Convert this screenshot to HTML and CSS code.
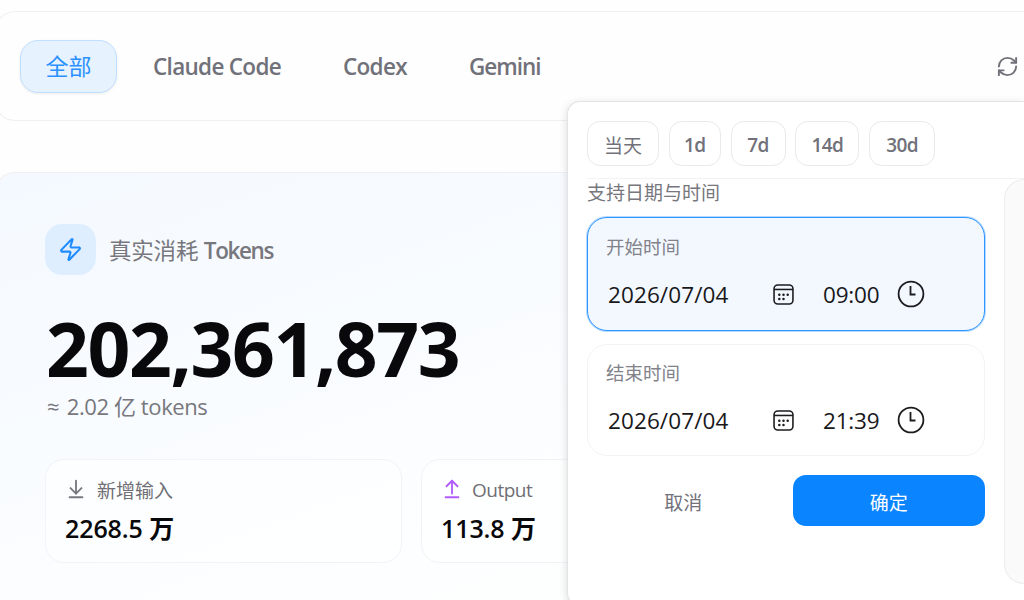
FILE: index.html
```html
<!DOCTYPE html>
<html lang="zh-CN">

<head>
    <meta charset="UTF-8">
    <meta name="viewport" content="width=device-width, initial-scale=1.0">
    <title>Token Usage</title>
    <link rel="stylesheet" href="styles.css">
</head>

<body>

    <div class="page">
        <nav class="filter-bar">
            <button class="tab active">全部</button>
            <button class="tab claude">Claude Code</button>
            <button class="tab codex">Codex</button>
            <button class="tab gemini">Gemini</button>
            <svg class="icon refresh" viewBox="0 0 24 24">
                <path d="M3 12a9 9 0 0 1 9-9 9.75 9.75 0 0 1 6.74 2.74L21 8" />
                <path d="M21 3v5h-5" />
                <path d="M21 12a9 9 0 0 1-9 9 9.75 9.75 0 0 1-6.74-2.74L3 16" />
                <path d="M8 16H3v5" />
            </svg>
        </nav>

        <section class="usage-card">
            <div class="usage-title">
                <span class="badge">
                    <svg class="icon" viewBox="0 0 24 24">
                        <path d="M4 14a1 1 0 0 1-.78-1.63l9.9-10.2a.5.5 0 0 1 .86.46l-1.92 6.02A1 1 0 0 0 13 10h7a1 1 0 0 1 .78 1.63l-9.9 10.2a.5.5 0 0 1-.86-.46l1.92-6.02A1 1 0 0 0 11 14z" />
                    </svg>
                </span>
                <h2>真实消耗 <b>Tokens</b></h2>
            </div>
            <div class="total">202,361,873</div>
            <div class="approx">≈ <span>2.02 亿 tokens</span></div>

            <div class="stats">
                <div class="stat">
                    <div class="stat-label">
                        <svg class="icon" viewBox="0 0 24 24">
                            <path d="M12 17V3" />
                            <path d="m6 11 6 6 6-6" />
                            <path d="M19 21H5" />
                        </svg>
                        <span>新增输入</span>
                    </div>
                    <div class="stat-value">2268.5 <b>万</b></div>
                </div>
                <div class="stat output">
                    <div class="stat-label">
                        <svg class="icon" viewBox="0 0 24 24">
                            <path d="m18 9-6-6-6 6" />
                            <path d="M12 3v14" />
                            <path d="M5 21h14" />
                        </svg>
                        <span>Output</span>
                    </div>
                    <div class="stat-value">113.8 <b>万</b></div>
                </div>
            </div>
        </section>
    </div>

    <div class="popover">
        <div class="presets">
            <button class="preset today">当天</button>
            <button class="preset d1">1d</button>
            <button class="preset d7">7d</button>
            <button class="preset d14">14d</button>
            <button class="preset d30">30d</button>
        </div>
        <div class="popover-body">
            <div class="range">
                <div class="hint">支持日期与时间</div>
                <div class="field selected">
                    <div class="field-label">开始时间</div>
                    <div class="field-row">
                        <span class="date">2026/07/04</span>
                        <svg class="calendar" viewBox="0 0 20 20">
                            <rect x="1" y="1" width="18" height="18" rx="3.5" />
                            <path d="M1 5.2h18" />
                            <path class="dots" d="M6 10.2h.01M10 10.2h.01M14 10.2h.01M6 14.2h.01M10 14.2h.01" />
                        </svg>
                        <span class="time">09:00</span>
                        <svg class="clock" viewBox="0 0 28 28">
                            <circle cx="14" cy="14" r="12.4" />
                            <path d="M13.5 6V14.5H18.5" />
                        </svg>
                    </div>
                </div>
                <div class="field">
                    <div class="field-label">结束时间</div>
                    <div class="field-row">
                        <span class="date">2026/07/04</span>
                        <svg class="calendar" viewBox="0 0 20 20">
                            <rect x="1" y="1" width="18" height="18" rx="3.5" />
                            <path d="M1 5.2h18" />
                            <path class="dots" d="M6 10.2h.01M10 10.2h.01M14 10.2h.01M6 14.2h.01M10 14.2h.01" />
                        </svg>
                        <span class="time">21:39</span>
                        <svg class="clock" viewBox="0 0 28 28">
                            <circle cx="14" cy="14" r="12.4" />
                            <path d="M13.5 6V14.5H18.5" />
                        </svg>
                    </div>
                </div>
                <div class="actions">
                    <button class="cancel">取消</button>
                    <button class="confirm">确定</button>
                </div>
            </div>
            <div class="month-panel"></div>
        </div>
    </div>

</body>

</html>
```

FILE: styles.css
```css
* {
    box-sizing: border-box;
}

body {
    margin: 0;
    width: 1024px;
    height: 600px;
    overflow: hidden;
    position: relative;
    background-color: #fefefe;
    color: #09090b;
    font-family: "Open Sans", "Noto Sans CJK SC", sans-serif;
}

button {
    font-family: inherit;
    background: none;
    border: none;
    margin: 0;
    padding: 0;
    white-space: nowrap;
}

.icon {
    display: block;
    fill: none;
    stroke: currentColor;
    stroke-width: 2;
    stroke-linecap: round;
    stroke-linejoin: round;
}

.page {
    width: 1029px;
    margin-left: -5px;
    padding-top: 11px;
}

/* top filter bar */
.filter-bar {
    display: flex;
    align-items: center;
    height: 110px;
    padding-left: 24px;
    border: 1px solid #f0f0f2;
    border-right: none;
    border-radius: 20px 0 0 20px;
}

.tab {
    flex: none;
    height: 53px;
    font-size: 22.5px;
    font-weight: 600;
    text-align: left;
    color: #71717a;
}

.tab.active {
    width: 97px;
    margin-right: 36px;
    padding-bottom: 2px;
    border: 1px solid #bfdfff;
    border-radius: 18px;
    background-color: #e7f2ff;
    box-shadow: 0 1px 3px rgba(0, 0, 0, 0.07);
    color: #2b91ff;
    font-size: 23px;
    font-weight: 400;
    text-align: center;
}

.claude {
    width: 190px;
    letter-spacing: -0.7px;
}

.codex {
    width: 126px;
    letter-spacing: -0.7px;
}

.gemini {
    width: 527px;
    letter-spacing: -1px;
}

.refresh {
    flex: none;
    width: 23px;
    height: 23px;
    color: #71717a;
}

/* usage summary */
.usage-card {
    height: 428px;
    margin-top: 51px;
    padding: 50px 0 0 49px;
    border: 1px solid #f0f0f3;
    border-width: 1px 0 0 1px;
    border-radius: 20px 0 0 0;
    background: linear-gradient(160deg, #f4f9ff 0%, #f9fcff 40%, #fdfeff 65%, #fefefe 90%);
}

.usage-title {
    display: flex;
    align-items: center;
    gap: 13px;
    height: 52px;
}

.badge {
    display: grid;
    place-items: center;
    width: 51px;
    height: 51px;
    border-radius: 17px;
    background-color: #dfeeff;
    color: #1e8cff;
}

.badge .icon {
    width: 25px;
    height: 25px;
}

.usage-title h2 {
    margin: 1px 0 0;
    font-size: 22.5px;
    font-weight: 400;
    letter-spacing: -0.2px;
    color: #77777d;
}

.usage-title b {
    font-weight: 600;
    letter-spacing: -1.4px;
}

.total {
    height: 76px;
    margin: 35px 0 0 1px;
    font-size: 75px;
    font-weight: 700;
    line-height: 76px;
    letter-spacing: -1.4px;
}

.approx {
    height: 30px;
    margin: 5px 0 0 2px;
    font-size: 22px;
    line-height: 30px;
    letter-spacing: -0.3px;
    color: #77777d;
}

.approx span {
    margin-left: 2px;
    letter-spacing: -0.4px;
}

.stats {
    display: flex;
    gap: 19px;
    width: 734px;
    margin-top: 38px;
}

.stat {
    width: 357px;
    height: 104px;
    padding: 16px 19px;
    border: 1px solid #f2f3f5;
    border-radius: 19px;
    background-color: rgba(255, 255, 255, 0.6);
}

.stat-label {
    display: flex;
    align-items: center;
    gap: 10px;
    height: 28px;
    font-size: 19px;
    color: #6f6f75;
}

.stat-label .icon {
    width: 22px;
    height: 22px;
    margin-top: -2px;
    color: #77777d;
}

.output .icon {
    color: #b05cfb;
}

.output .stat-label {
    gap: 9px;
    letter-spacing: -0.5px;
}

.stat-value {
    height: 36px;
    margin-top: 6px;
    font-size: 25px;
    font-weight: 600;
    line-height: 36px;
    letter-spacing: -0.1px;
}

.stat-value b {
    font-weight: 700;
}

/* date range popover */
.popover {
    position: absolute;
    top: 101px;
    left: 567px;
    width: 457px;
    height: 505px;
    padding: 19px 0 0 19px;
    border: 1px solid #e4e4e7;
    border-right: none;
    border-radius: 13px 0 0 13px;
    background-color: #fff;
    box-shadow: 0 2px 8px rgba(0, 0, 0, 0.14);
}

.presets {
    display: flex;
    gap: 9.8px;
    height: 58px;
    border-bottom: 1px solid #f2f2f3;
}

.preset {
    height: 45px;
    padding-top: 2px;
    border: 1px solid #e9e9eb;
    border-radius: 13px;
    font-size: 19px;
    font-weight: 600;
    letter-spacing: -0.6px;
    color: #71717a;
}

.today {
    width: 72px;
    font-weight: 400;
    letter-spacing: 0;
}

.d1 {
    width: 52px;
}

.d7 {
    width: 55px;
}

.d14 {
    width: 64px;
}

.d30 {
    width: 66px;
}

.popover-body {
    display: flex;
    gap: 19px;
}

.range {
    flex: none;
    width: 398px;
}

.hint {
    height: 38px;
    font-size: 19px;
    line-height: 29px;
    color: #77777e;
}

.field {
    height: 112px;
    margin-bottom: 13px;
    padding: 14px 0 0 18px;
    border: 1px solid #f3f3f4;
    border-radius: 20px;
}

.field.selected {
    height: 114px;
    padding-top: 15px;
    border-color: #2f95ff;
    background-color: #f3f8ff;
    box-shadow: 0 0 0 1px rgba(10, 132, 255, 0.3);
}

.field-label {
    height: 28px;
    font-size: 18.5px;
    line-height: 28px;
    color: #82828a;
}

.field-row {
    display: flex;
    align-items: center;
    height: 30px;
    margin-top: 19px;
    padding-left: 2px;
    font-size: 22.5px;
    line-height: 30px;
    color: #18181b;
}

.date {
    width: 165px;
    letter-spacing: 0.1px;
}

.calendar,
.clock {
    flex: none;
    fill: none;
    stroke: #1c1c1f;
    stroke-width: 1.5;
}

.calendar {
    width: 21px;
    height: 21px;
    margin-top: -2px;
}

.calendar .dots {
    stroke-width: 2.4;
    stroke-linecap: round;
}

.time {
    width: 74px;
    margin-left: 29px;
    letter-spacing: -0.2px;
}

.clock {
    width: 28px;
    height: 28px;
    margin-top: -2px;
    stroke-width: 1.8;
}

.actions {
    display: grid;
    grid-template-columns: 1fr 1fr;
    gap: 13px;
    height: 51px;
    margin-top: 19px;
}

.cancel,
.confirm {
    padding-top: 2px;
    font-size: 19px;
    border-radius: 13px;
}

.cancel {
    color: #71717a;
}

.confirm {
    background-color: #0a84ff;
    color: #fff;
}

.month-panel {
    flex: 1;
    height: 405px;
    border: 1px solid #ededef;
    border-right: none;
    border-radius: 20px 0 0 20px;
    background-color: #fafafa;
}
```
